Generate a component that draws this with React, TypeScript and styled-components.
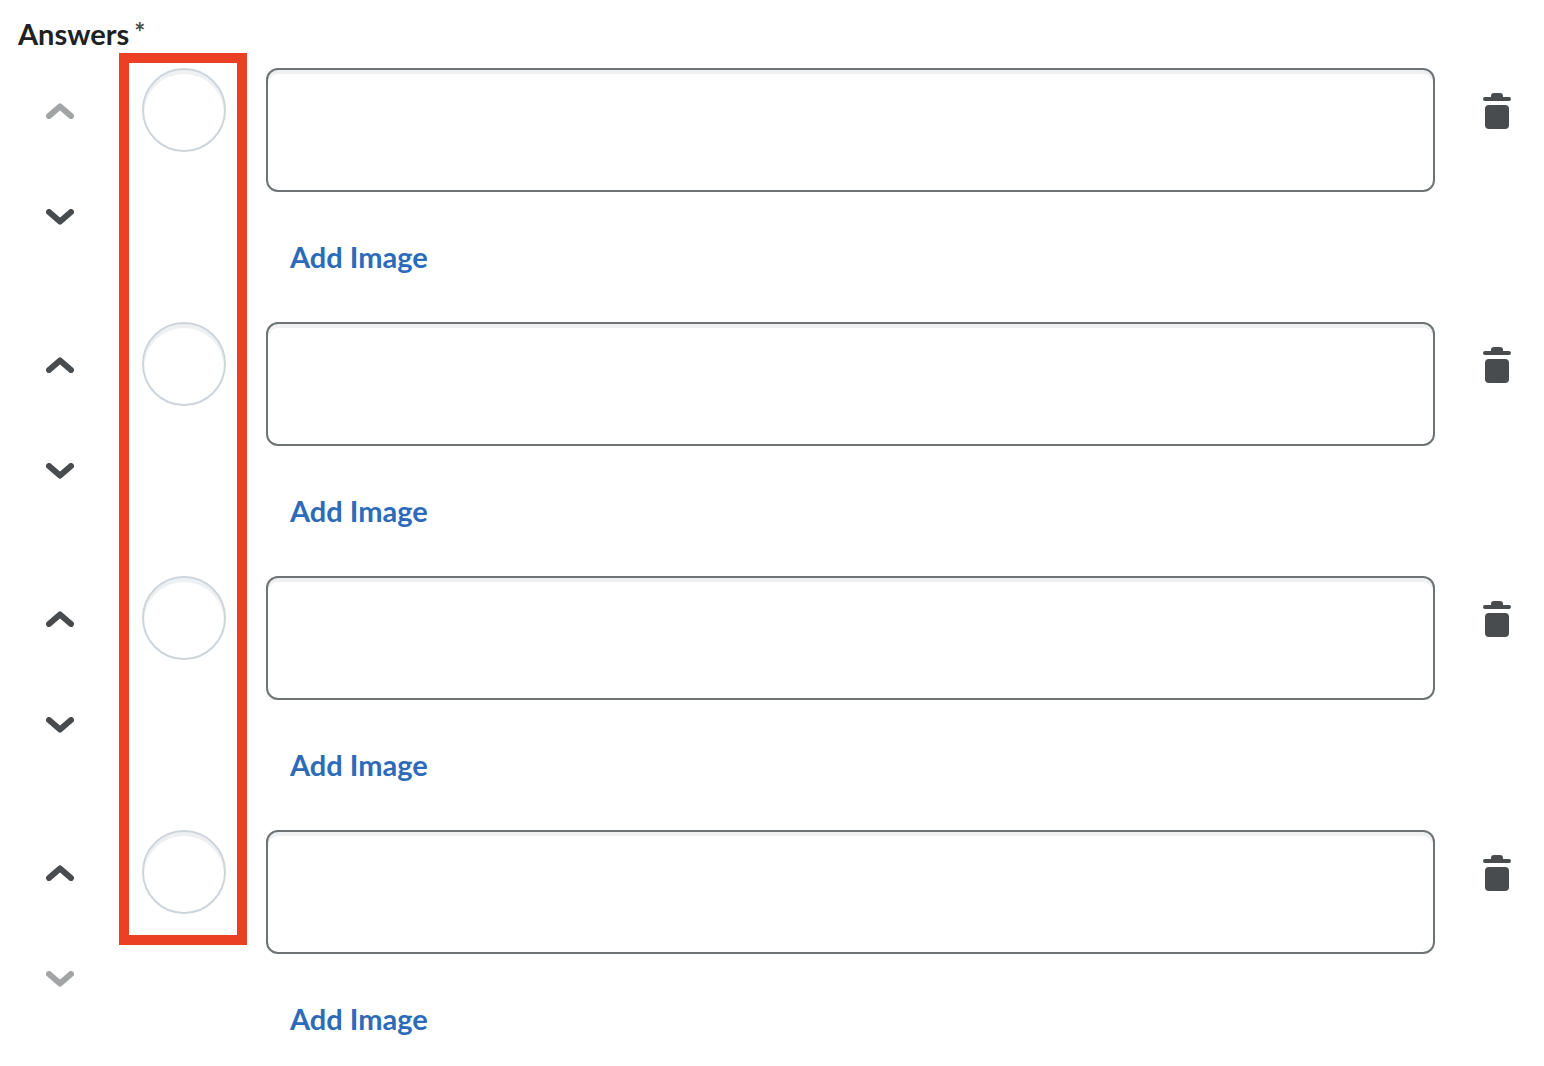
import React, { useState } from 'react';
import styled, { createGlobalStyle } from 'styled-components';

const GlobalStyle = createGlobalStyle`
  *, *::before, *::after {
    box-sizing: border-box;
  }
  body {
    margin: 0;
    background: #fff;
    color: #202122;
    font-family: Lato, 'Liberation Sans', sans-serif;
    font-size: 29px;
    line-height: 36px;
  }
`;

const Fieldset = styled.fieldset`
  margin: 0;
  border: 0;
  min-width: 0;
  padding: 16px 5px 0 18px;
`;

const Legend = styled.legend`
  display: flex;
  gap: 5px;
  float: left;
  width: 100%;
  height: 52px;
  padding: 0;
  font-weight: 700;
`;

const Required = styled.span`
  font-size: 26px;
  line-height: 32px;
  color: #494c4e;
`;

const AnswerList = styled.div`
  clear: both;
  position: relative;
  display: flex;
  flex-direction: column;
  gap: 24px;
`;

const Highlight = styled.div`
  position: absolute;
  top: -15px;
  bottom: 115px;
  left: 101px;
  width: 128px;
  border: 10px solid #ec4024;
  pointer-events: none;
`;

const AnswerRow = styled.div`
  display: grid;
  grid-template-columns: 84px 84px minmax(0, 1fr) 84px;
  column-gap: 40px;
  align-items: start;
`;

const MoveButtons = styled.div`
  display: flex;
  flex-direction: column;
  gap: 20px;
`;

const IconButton = styled.button`
  display: flex;
  align-items: center;
  justify-content: center;
  width: 84px;
  height: 86px;
  padding: 0;
  border: 0;
  border-radius: 12px;
  background: transparent;
  color: #494c4e;
  cursor: pointer;

  &:disabled {
    opacity: 0.5;
    cursor: default;
  }
`;

const Radio = styled.input`
  appearance: none;
  width: 84px;
  height: 84px;
  margin: 0;
  border: 2px solid #cdd5dc;
  border-radius: 50%;
  background: #fff;
  box-shadow: inset 0 4px 0 #eef0f2;

  &:checked {
    background: radial-gradient(circle, #494c4e 30%, #fff 32%);
  }
`;

const Content = styled.div`
  display: flex;
  flex-direction: column;
  align-items: flex-start;
  gap: 24px;
  margin-right: -20px;
`;

const AnswerInput = styled.textarea`
  display: block;
  width: 100%;
  height: 124px;
  padding: 20px 24px;
  border: 2px solid #6e7376;
  border-radius: 12px;
  background: #fff;
  box-shadow: inset 0 4px 0 #eef0f2;
  color: inherit;
  font: inherit;
  resize: none;
`;

const AddImageButton = styled.button`
  height: 82px;
  padding: 0 24px;
  border: 0;
  border-radius: 12px;
  background: transparent;
  color: #2d6bb9;
  font: inherit;
  font-weight: 700;
  cursor: pointer;
`;

const Chevron = ({ down = false }: { down?: boolean }) => (
  <svg width="28" height="16" viewBox="0 0 28 16" aria-hidden="true">
    <path
      d={down ? 'M3 3L14 12.6L25 3' : 'M3 13L14 3.4L25 13'}
      fill="none"
      stroke="currentColor"
      strokeWidth="6"
      strokeLinecap="round"
      strokeLinejoin="round"
    />
  </svg>
);

const Trash = () => (
  <svg width="28" height="36" viewBox="0 0 28 36" fill="currentColor" aria-hidden="true">
    <path d="M2 4H8V3Q8 0 11 0H17Q20 0 20 3V4H26A2 2 0 0 1 26 8H2A2 2 0 0 1 2 4Z" />
    <rect x="2" y="12" width="24" height="24" rx="4" />
  </svg>
);

const ANSWERS = [1, 2, 3, 4];

export default function App() {
  const [texts, setTexts] = useState<Record<number, string>>({});

  return (
    <>
      <GlobalStyle />
      <Fieldset>
        <Legend>
          Answers <Required>*</Required>
        </Legend>
        <AnswerList>
          {ANSWERS.map((id, index) => (
            <AnswerRow key={id}>
              <MoveButtons>
                <IconButton type="button" aria-label={`Move answer ${id} up`} disabled={index === 0}>
                  <Chevron />
                </IconButton>
                <IconButton
                  type="button"
                  aria-label={`Move answer ${id} down`}
                  disabled={index === ANSWERS.length - 1}
                >
                  <Chevron down />
                </IconButton>
              </MoveButtons>
              <Radio type="radio" name="correct" aria-label={`Answer ${id} is correct`} />
              <Content>
                <AnswerInput
                  aria-label={`Answer ${id}`}
                  value={texts[id] ?? ''}
                  onChange={(e) => setTexts({ ...texts, [id]: e.target.value })}
                />
                <AddImageButton type="button">Add Image</AddImageButton>
              </Content>
              <IconButton type="button" aria-label={`Delete answer ${id}`}>
                <Trash />
              </IconButton>
            </AnswerRow>
          ))}
          <Highlight />
        </AnswerList>
      </Fieldset>
    </>
  );
}
